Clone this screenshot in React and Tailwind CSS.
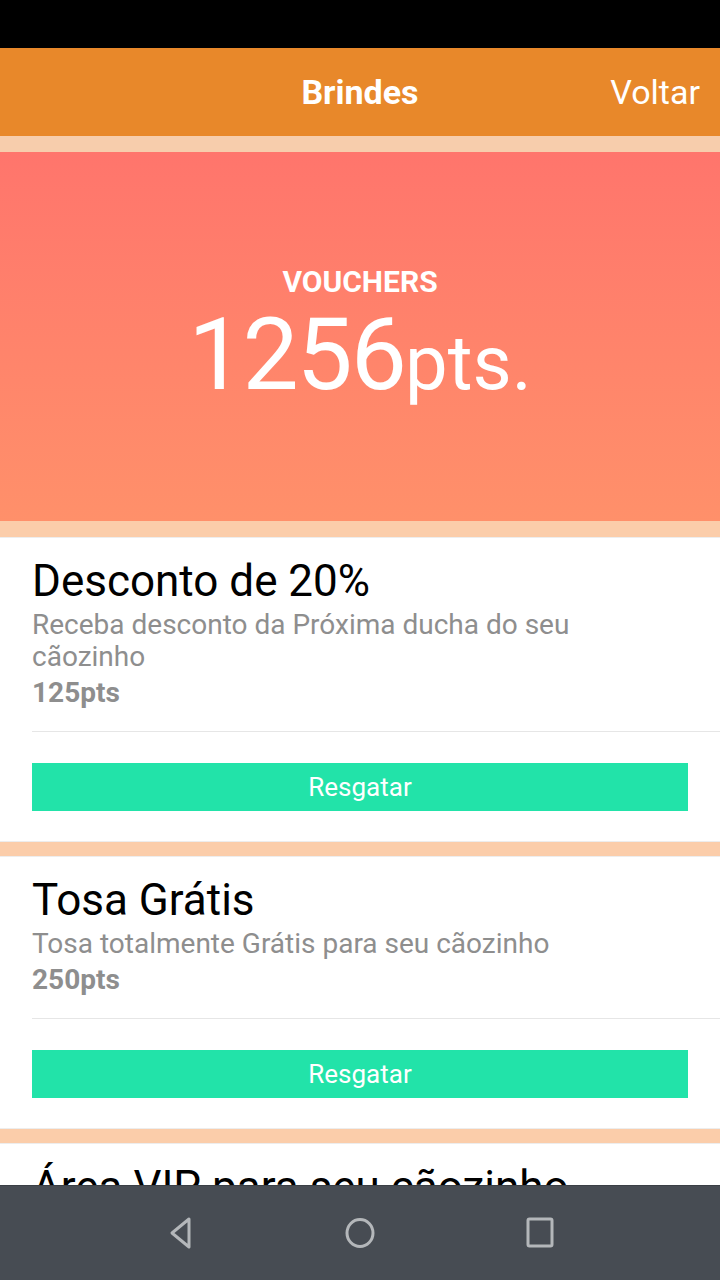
import React from 'react';

const vouchers = [
  {
    title: 'Desconto de 20%',
    description: 'Receba desconto da Próxima ducha do seu cãozinho',
    points: 125
  },
  {
    title: 'Tosa Grátis',
    description: 'Tosa totalmente Grátis para seu cãozinho',
    points: 250
  },
  {
    title: 'Área VIP para seu cãozinho',
    description: 'Acesso à área VIP durante o banho',
    points: 500
  }
];

const VoucherCard = ({ voucher }) => (
  <div className="bg-white border-y border-[#EDEDED] pt-[19px] pb-[30px]">
    <div className="pl-8">
      <h2 className="text-[44px] leading-[48px] text-black">{voucher.title}</h2>
      <p className="mt-1 pr-[130px] text-[28px] leading-[32px] text-[#8E8E8E]">
        {voucher.description}
      </p>
      <p className="mt-1 text-[28px] leading-[32px] font-bold text-[#8E8E8E]">
        {voucher.points}pts
      </p>
      <div className="mt-[22px] h-px bg-[#E6E6E6]" />
    </div>
    <div className="px-8 mt-[31px]">
      <button className="w-full h-12 bg-[#22E3A9] text-white text-[26px]">
        Resgatar
      </button>
    </div>
  </div>
);

const App = () => {
  return (
    <div
      className="w-[720px] h-[1280px] flex flex-col overflow-hidden bg-[#FBCDAA]"
      style={{ fontFamily: 'Roboto, "Noto Sans", sans-serif' }}
    >
      {/* Status bar */}
      <div className="h-12 shrink-0 bg-black" />

      {/* Header */}
      <div className="h-[88px] shrink-0 bg-[#E8882A] grid grid-cols-3 items-center">
        <div />
        <h1 className="text-center text-[34px] font-bold text-white">Brindes</h1>
        <div className="text-right pr-5 text-[34px] text-white">Voltar</div>
      </div>

      {/* Content */}
      <div className="flex-1 overflow-hidden">
        <div className="h-4 bg-[#F7CDAC]" />
        <div className="h-[369px] bg-gradient-to-b from-[#FF756C] to-[#FF906A] flex flex-col items-center justify-center text-white">
          <div className="text-[30px] font-bold leading-none mt-[-2px]">VOUCHERS</div>
          <div className="flex items-baseline mt-2 leading-none">
            <span className="text-[100px] tracking-[-2px]">1256</span>
            <span className="text-[76px]">pts.</span>
          </div>
        </div>
        <div className="h-4 bg-[#FBCDAA]" />
        <div className="flex flex-col gap-[14px]">
          {vouchers.map((voucher, index) => (
            <VoucherCard key={index} voucher={voucher} />
          ))}
        </div>
      </div>

      {/* Navigation bar */}
      <div className="h-[95px] shrink-0 bg-[#474C53] border-t border-[#3A3F45] flex items-center justify-center gap-[148px]">
        <svg width="32" height="36" viewBox="0 0 32 36">
          <path d="M25 4 L8 18 L25 32 Z" fill="none" stroke="#B4B7BA" strokeWidth="3" strokeLinejoin="round" />
        </svg>
        <svg width="32" height="36" viewBox="0 0 32 36">
          <ellipse cx="16" cy="18" rx="13" ry="13.5" fill="none" stroke="#B4B7BA" strokeWidth="3" />
        </svg>
        <svg width="32" height="36" viewBox="0 0 32 36">
          <rect x="4" y="4" width="24" height="27" rx="1.5" fill="none" stroke="#B4B7BA" strokeWidth="3" />
        </svg>
      </div>
    </div>
  );
};

export default App;
